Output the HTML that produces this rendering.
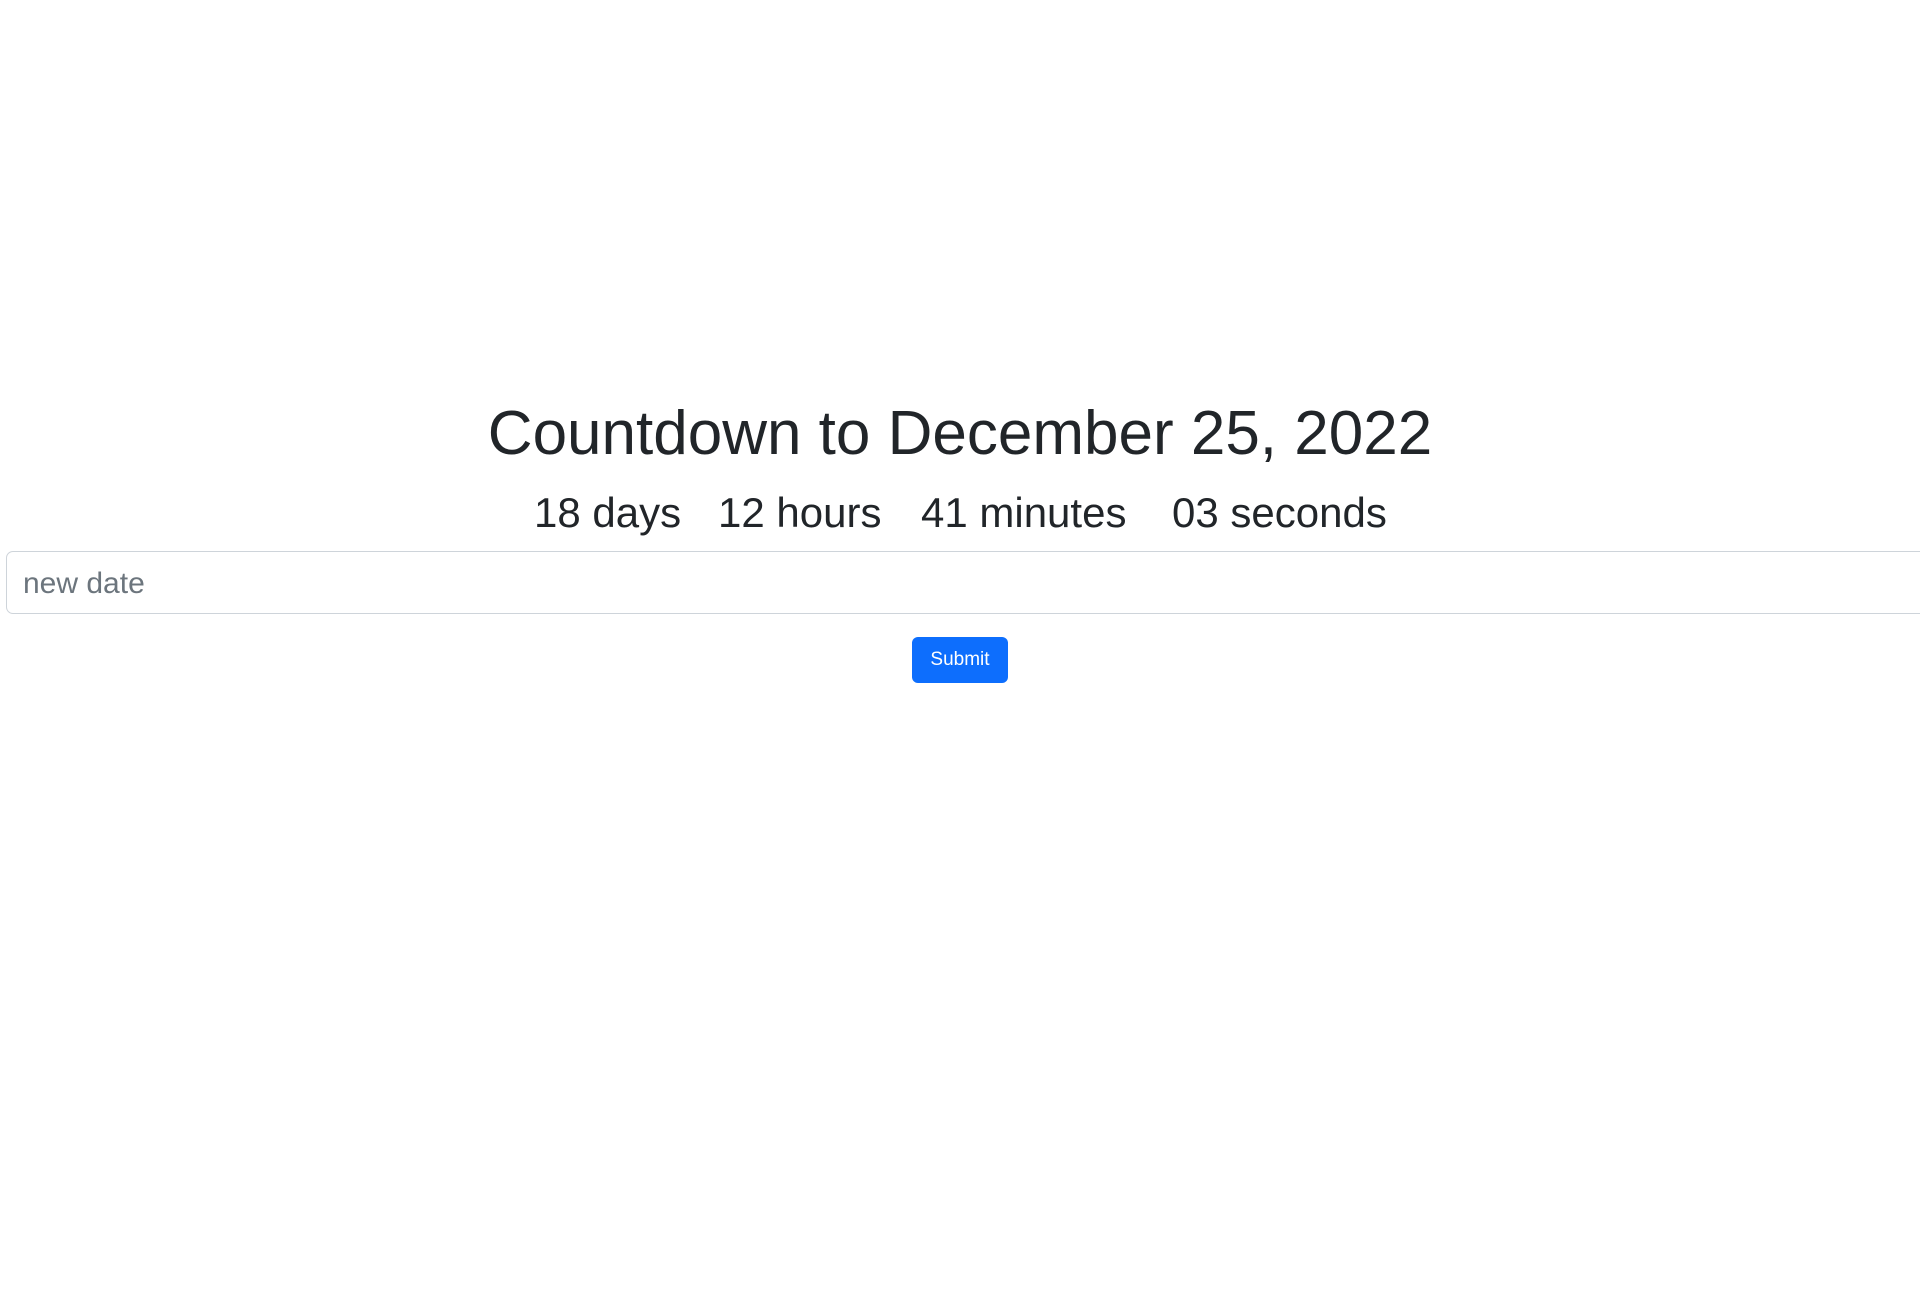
<!DOCTYPE html>
<html><head><style>
body{margin:0;width:1920px;height:1316px;background:#fff;position:relative;font-family:"Liberation Sans",Arial,sans-serif;color:#212529;overflow:hidden}
.t{position:absolute;white-space:nowrap;line-height:1}
</style></head><body>
<div class="t" style="left:0;width:1920px;text-align:center;top:403px;font-size:62px">Countdown to December 25, 2022</div>
<div class="t" style="left:534px;top:492px;font-size:42px">18 days</div>
<div class="t" style="left:718px;top:492px;font-size:42px">12 hours</div>
<div class="t" style="left:921px;top:492px;font-size:42px">41 minutes</div>
<div class="t" style="left:1172px;top:492px;font-size:42px">03 seconds</div>
<div style="position:absolute;left:6px;top:551px;width:1930px;height:63px;border:1px solid #ced4da;border-radius:7px;box-sizing:border-box"></div>
<div class="t" style="left:23px;top:569px;font-size:30px;color:#6c757d">new date</div>
<div style="position:absolute;left:912px;top:637px;width:96px;height:46px;background:#0d6efd;border-radius:6px;color:#fff;font-size:19px;line-height:46px;text-align:center">Submit</div>
</body></html>
